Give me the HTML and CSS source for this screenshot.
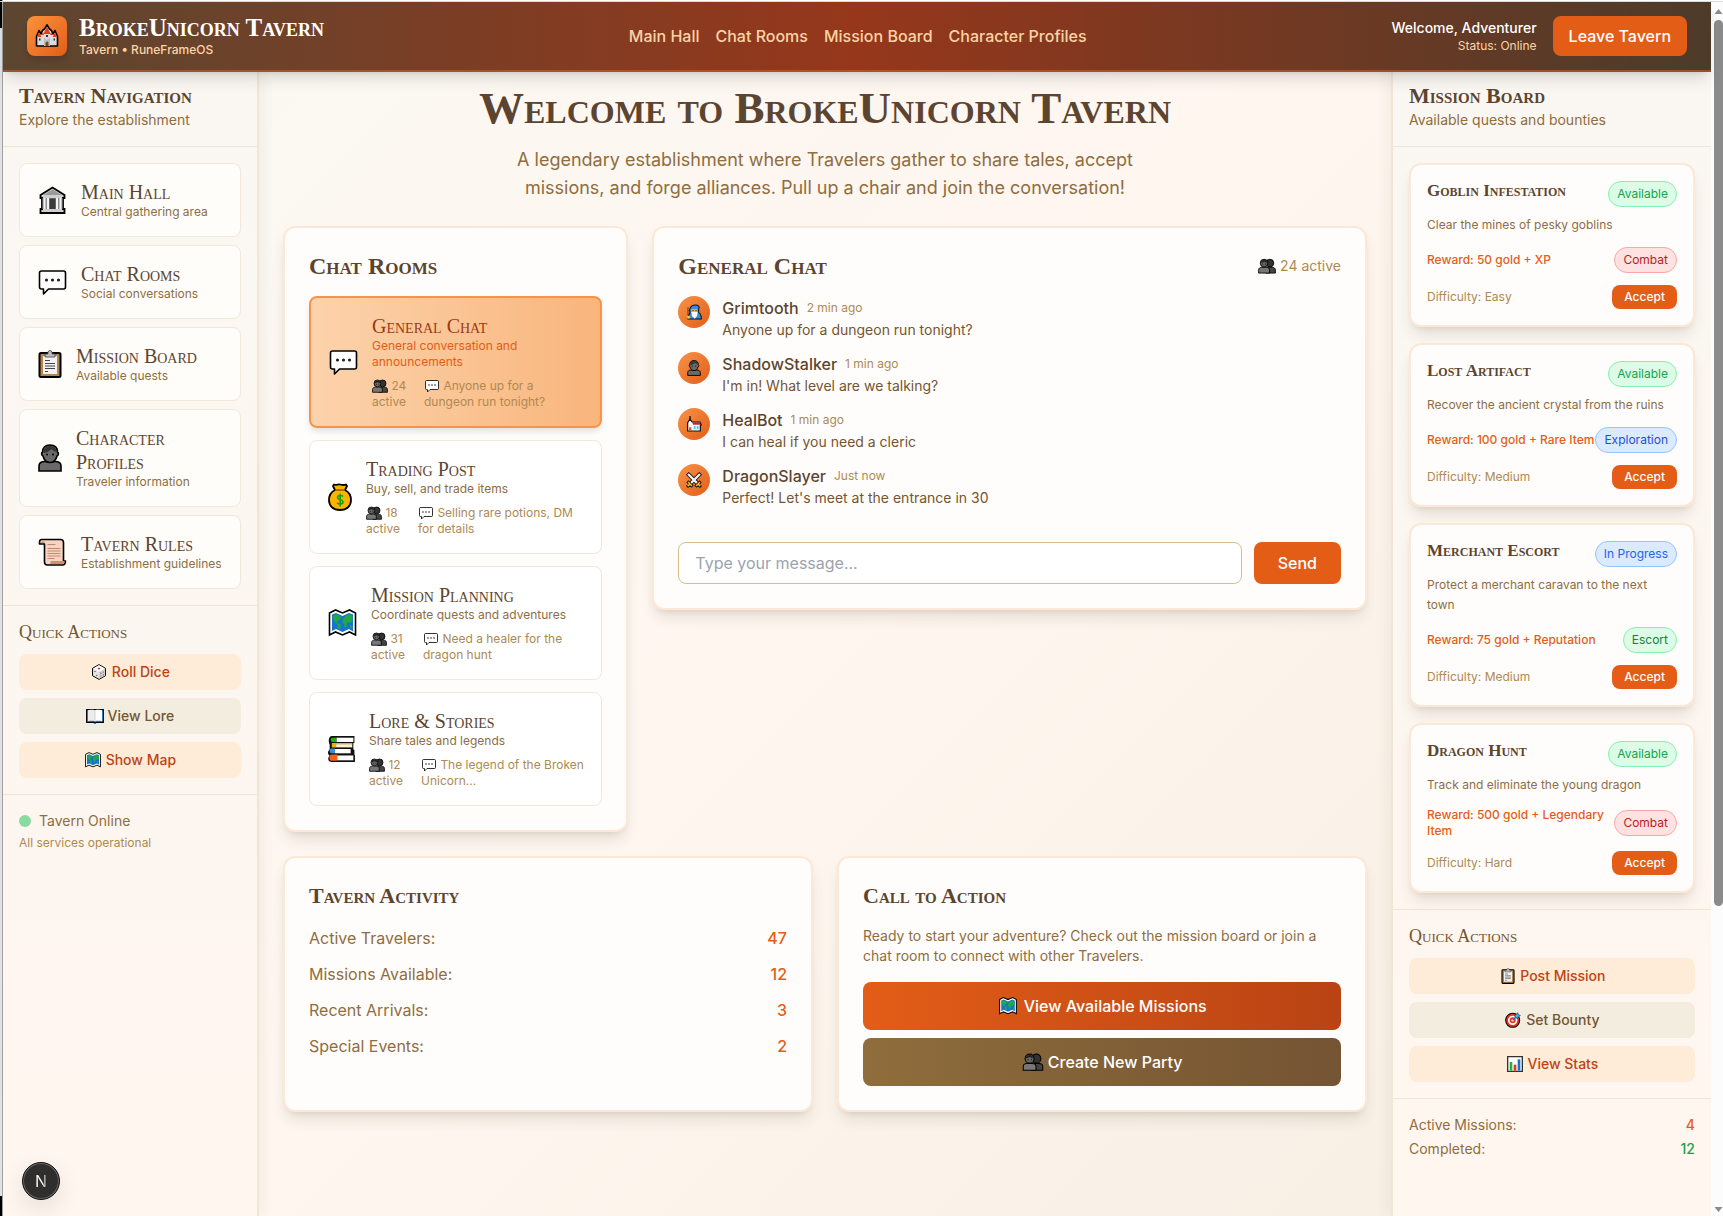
FILE: index.html
```html
<!DOCTYPE html>
<html lang="en">
<head>
<meta charset="utf-8">
<meta name="viewport" content="width=device-width, initial-scale=1">
<title>BrokeUnicorn Tavern</title>
<link rel="stylesheet" href="styles.css">
</head>
<body>
<svg class="sprite" aria-hidden="true">
  <symbol id="castle" viewBox="0 0 24 24">
    <path d="M1.500 22V12.500L4 6.500l2 3.500 1.500-3.500L9.500 5 12 .800 14.500 5l2 1.500L18 10l2-3.500 2.500 6V22z" fill="#dcdcdc" stroke="#000" stroke-width="1.600" stroke-linejoin="round"/>
    <path d="M2.300 13L4 8l2.300 5zM17.700 13L20 8l1.700 5zM8.500 10L12 2.500l3.500 7.500zM6.500 11l1.300-3L9 11zM15 11l1.200-3 1.300 3z" fill="#f03a1c"/>
    <path d="M9 22v-8h1.500v1.500h3V14H15v8z" fill="#bdbdbd"/>
    <path d="M10.500 22v-3a1.500 1.500 0 0 1 3 0v3z" fill="#7a4a22"/>
    <path d="M4 14.500h1.500v2H4zM18.500 14.500H20v2h-1.500zM11 11h2v2h-2z" fill="#333"/>
  </symbol>
  <symbol id="hall" viewBox="0 0 26 28">
    <path d="M1 9l12-7.500L25 9v3h-1.500v11H25v4H1v-4h1.500V12H1z" fill="#cfcfcf" stroke="#000" stroke-width="1.800"/>
    <path d="M4 9l9-5.500L22 9z" fill="#9a9a9a"/>
    <path d="M3 12h20v11H3z" fill="#8d8d8d"/>
    <path d="M4 12h2v11H4zM7.500 12h2v11h-2zM16.500 12h2v11h-2zM20 12h2v11h-2z" fill="#f4f4f4"/>
    <path d="M10 12.500h6V23h-6z" fill="#3a3a3a"/>
  </symbol>
  <symbol id="chat" viewBox="0 0 28 28">
    <path d="M3 3h22a2 2 0 0 1 2 2v14a2 2 0 0 1-2 2H10l-5 5v-5H3a2 2 0 0 1-2-2V5a2 2 0 0 1 2-2z" fill="#fff" stroke="#000" stroke-width="1.600" stroke-linejoin="round"/>
    <g fill="#222"><circle cx="8" cy="12" r="1.600"/><circle cx="14" cy="12" r="1.600"/><circle cx="20" cy="12" r="1.600"/></g>
  </symbol>
  <symbol id="clipboard" viewBox="0 0 24 28">
    <rect x="1.500" y="3" width="21" height="24" rx="1.500" fill="#b58550" stroke="#000" stroke-width="2"/>
    <path d="M5 6h14v18H5z" fill="#f1f1f1"/>
    <path d="M7 7V4h3V2.500a2 2 0 0 1 4 0V4h3v3z" fill="#bdbdbd" stroke="#444" stroke-width=".800"/>
    <path d="M7 10.500h5M7 13.500h10M7 16h10M7 18.500h10M7 21.500h3" stroke="#444" stroke-width="1"/>
  </symbol>
  <symbol id="person" viewBox="0 0 24 28">
    <path d="M1 27v-5c0-3 2.500-4.500 6-4.500h10c3.500 0 6 1.500 6 4.500v5z" fill="#6a6a6a" stroke="#000" stroke-width="1.600"/>
    <path d="M12 1c5 0 7.500 3 7.500 7 1.500 1 1 3.500-.500 4-1 4-3.500 6.500-7 6.500S6 16 5 12c-1.500-.500-2-3-.500-4C4.500 4 7 1 12 1z" fill="#6a6a6a" stroke="#000" stroke-width="1.600"/>
    <path d="M12 2c4.500 0 6.500 3 6.500 6-3-1-4-2-5-3-2 2.500-5 3.500-8 4C5.500 5 7.500 2 12 2z" fill="#333"/>
    <circle cx="9" cy="10.500" r="1" fill="#000"/><circle cx="15" cy="10.500" r="1" fill="#000"/>
  </symbol>
  <symbol id="people" viewBox="0 0 28 24">
    <path d="M12 23v-5c0-3 2-4 5-4h5c3 0 5 1.500 5 4v5z" fill="#444" stroke="#000" stroke-width="1.400"/>
    <circle cx="18.500" cy="7.500" r="6" fill="#333" stroke="#000" stroke-width="1.400"/>
    <path d="M1 23v-5c0-2.500 2-4 5-4h7c3 0 5 1.500 5 4v5z" fill="#777" stroke="#000" stroke-width="1.400"/>
    <circle cx="9.500" cy="7.500" r="6" fill="#666" stroke="#000" stroke-width="1.400"/>
    <path d="M4 7c1-6 10-6 11 0-4 0-5-2-5-2s-2 2-6 2z" fill="#222"/>
    <circle cx="7.500" cy="9" r=".800"/><circle cx="12" cy="9" r=".800"/>
  </symbol>
  <symbol id="scroll" viewBox="0 0 28 28">
    <path d="M3 1.500h19c2 0 3 1 3 3V23h2c0 3-1 4-3 4H9c-2 0-3-1-3-3V6H1c0-3 0-4.500 2-4.500z" fill="#f8d4c0" stroke="#000" stroke-width="1.600" stroke-linejoin="round"/>
    <path d="M2 5h4V3.500H3zM12 23h14c0 2-.500 3-2 3H11c1-.500 1.500-1.500 1-3z" fill="#c99272"/>
    <path d="M9 6.500h8M9 10.500h13M9 13h13M9 15.500h13M9 18h13M9 20.500h7" stroke="#c08a6c" stroke-width="1"/>
  </symbol>
  <symbol id="dice" viewBox="0 0 24 26">
    <path d="M12 1l10.500 6v12L12 25 1.500 19V7z" fill="#e4e4e4" stroke="#000" stroke-width="1.600"/>
    <path d="M12 2l9 5.500-9 5-9-5z" fill="#fff"/><path d="M12 13l9.500-5v10.500L12 24z" fill="#d4d4d4"/>
    <ellipse cx="12" cy="7.500" rx="2" ry="1.500" fill="#e02828"/>
    <g fill="#444"><circle cx="5.500" cy="12" r="1"/><circle cx="8.500" cy="18.500" r="1"/><circle cx="15" cy="15" r="1"/><circle cx="19" cy="13" r="1"/><circle cx="15" cy="19.500" r="1"/><circle cx="19" cy="17.500" r="1"/></g>
  </symbol>
  <symbol id="book" viewBox="0 0 28 24">
    <path d="M1 2h26v20H16l-2 1-2-1H1z" fill="#2b8be0" stroke="#000" stroke-width="1.800"/>
    <path d="M3 3c4-1 9-1 11 0v17c-2-1-7-1-11 0z" fill="#ececec"/><path d="M25 3c-4-1-9-1-11 0v17c2-1 7-1 11 0z" fill="#fff"/>
    <path d="M14 3v17" stroke="#bbb" stroke-width="1"/>
  </symbol>
  <symbol id="map" viewBox="0 0 28 28">
    <path d="M1 4l6-3 7 3 7-3 6 3v22l-6-3-7 3-7-3-6 3z" fill="#fff" stroke="#000" stroke-width="1.600"/>
    <path d="M3.500 5.500L7.500 4l6.500 3 6.500-3 4 1.500v17L20.500 20 14 23l-6.500-3-4 2z" fill="#1673d1"/>
    <path d="M4 7l4-2 5 3-2 3-2 1-1 3-3-4zM9 14l3 1v4l-2 2-1-4zM14 11l3-4 4-2 3 2v5l-3 2-2-1-1 5-2 1v-4l-2-1zM21 16l3 1v3l-2-1z" fill="#22a845"/>
  </symbol>
  <symbol id="bag" viewBox="0 0 24 28">
    <path d="M6 1.500c2 1 4-.500 6 0s4 1 6 0l1 1.500-2 4c4 2 6 6 6 10 0 6-4 10-11 10S1 23 1 17c0-4 2-8 6-10L5 3z" fill="#fdb400" stroke="#000" stroke-width="1.800" stroke-linejoin="round"/>
    <path d="M7 7h10" stroke="#8b5a00" stroke-width="1.500"/>
    <path d="M15 13.500c-1-1.500-5.500-1.500-5.500 1s5.500 2 5.500 4.500-4.500 2.500-6 .700M12.200 10.500v13" stroke="#16a016" stroke-width="1.600" fill="none"/>
  </symbol>
  <symbol id="books" viewBox="0 0 26 26">
    <path d="M4 1h21v6.500h-1v6l1 .500v4.500h.500V25H4c-4 0-4-4-2-6-2-1-2-4 0-5.500V9C.500 6 1 1 4 1z" fill="#111"/>
    <path d="M4.500 2.500h4v4h-4c-2 0-2-4 0-4z" fill="#17b317"/><path d="M8.500 2.500H24v4H8.500z" fill="#fff"/>
    <path d="M4 7.500h19v1H8v3H4z" fill="#f0b000"/><path d="M8 8.500h15v3H8z" fill="#fff4c8"/>
    <path d="M3.500 12.500H7v4.500H3.500c-2 0-2-4.500 0-4.500z" fill="#3a8fdc"/><path d="M7 13h14.500v4H7z" fill="#fff"/>
    <path d="M4 18h5v6H4c-3 0-3-6 0-6z" fill="#f4631b"/><path d="M9 19h15v4.500H9z" fill="#fff"/>
  </symbol>
  <symbol id="wizard" viewBox="0 0 24 24">
    <path d="M3 22.500c0-4 1-7 3-9-2-6 1-12 8-12 5 0 7 3 5 6v5c3 2 4 6 4 10z" fill="#2f8fe8" stroke="#111" stroke-width="1.600"/>
    <path d="M8 8h9v5H8z" fill="#f7c53c"/><path d="M8 12h9.500l-1 6-3.500 4-4-4z" fill="#fff"/>
    <circle cx="10.500" cy="10" r=".900"/><circle cx="15" cy="10" r=".900"/><circle cx="4" cy="20" r="2.200" fill="#f7c53c"/><path d="M3 5v12" stroke="#6b3d14" stroke-width="1.600"/>
  </symbol>
  <symbol id="church" viewBox="0 0 24 24">
    <path d="M2.500 22.500V10L6 4.500 9 9h12l2 4.500h-1.500v9z" fill="#fff" stroke="#111" stroke-width="1.800"/>
    <path d="M6 0v6" stroke="#111" stroke-width="2"/><path d="M9.500 9.500h11l1.800 3.500H10.500z" fill="#c92020"/>
    <path d="M4.500 17H8v5H4.500z" fill="#e8541c"/><path d="M11.500 15h3v5h-3zM16 15h3v5h-3z" fill="#4dd0f5"/>
  </symbol>
  <symbol id="swords" viewBox="0 0 24 24">
    <path d="M2 2l16 16M22 2L6 18" stroke="#111" stroke-width="6"/>
    <path d="M3 3l14 14M21 3L7 17" stroke="#f2f2f2" stroke-width="3.500"/>
    <path d="M2 14l8 8M22 14l-8 8M6 18l-4.500 4.500M18 18l4.500 4.500" stroke="#111" stroke-width="4.500"/>
    <path d="M3 15l6 6M21 15l-6 6M6 18l-3.500 3.500M18 18l3.500 3.500" stroke="#f5b82e" stroke-width="2.200"/>
  </symbol>
  <symbol id="target" viewBox="0 0 24 24">
    <circle cx="11.500" cy="12.500" r="10.500" fill="#e8341c" stroke="#000" stroke-width="1.600"/>
    <circle cx="11.500" cy="12.500" r="7" fill="#fff"/><circle cx="11.500" cy="12.500" r="4.500" fill="#e8341c"/><circle cx="11.500" cy="12.500" r="1.800" fill="#fff"/>
    <path d="M11.500 12.500L18 6" stroke="#1673d1" stroke-width="1.800"/><path d="M15 8.500V5l4-4 1 3 3 1-4 4h-3z" fill="#34b4ee" stroke="#114" stroke-width=".800"/>
  </symbol>
  <symbol id="chart" viewBox="0 0 24 24">
    <path d="M1 1h22v22H1z" fill="#fff" stroke="#333" stroke-width="2"/>
    <path d="M4 9h4v13H4z" fill="#22b33a"/><path d="M10 13h4v9h-4z" fill="#e8341c"/><path d="M16 5h4v17h-4z" fill="#1673d1"/>
  </symbol>
</svg>

<div class="app">
  <header class="topbar">
    <div class="brand">
      <span class="brand-mark"><svg class="ic-logo"><use href="#castle"/></svg></span>
      <div>
        <div class="display brand-name">BrokeUnicorn Tavern</div>
        <div class="brand-sub">Tavern • RuneFrameOS</div>
      </div>
    </div>
    <nav class="topnav">
      <a href="#main-hall">Main Hall</a>
      <a href="#chat-rooms">Chat Rooms</a>
      <a href="#mission-board">Mission Board</a>
      <a href="#profiles">Character Profiles</a>
    </nav>
    <div class="account">
      <div class="account-text">
        <div class="account-name">Welcome, Adventurer</div>
        <div class="account-status">Status: Online</div>
      </div>
      <button class="leave" type="button">Leave Tavern</button>
    </div>
  </header>

  <div class="columns">
    <aside class="side side-left">
      <div class="side-head">
        <h2 class="display side-title">Tavern Navigation</h2>
        <p class="side-sub">Explore the establishment</p>
      </div>
      <nav class="nav-list">
        <a class="nav-item" href="#main-hall"><svg class="ic-lg wide"><use href="#hall"/></svg><span><span class="display item-title">Main Hall</span><span class="item-sub">Central gathering area</span></span></a>
        <a class="nav-item" href="#chat-rooms"><svg class="ic-lg wide"><use href="#chat"/></svg><span><span class="display item-title">Chat Rooms</span><span class="item-sub">Social conversations</span></span></a>
        <a class="nav-item" href="#mission-board"><svg class="ic-lg"><use href="#clipboard"/></svg><span><span class="display item-title">Mission Board</span><span class="item-sub">Available quests</span></span></a>
        <a class="nav-item" href="#profiles"><svg class="ic-lg"><use href="#person"/></svg><span><span class="display item-title">Character<br>Profiles</span><span class="item-sub">Traveler information</span></span></a>
        <a class="nav-item" href="#rules"><svg class="ic-lg wide"><use href="#scroll"/></svg><span><span class="display item-title">Tavern Rules</span><span class="item-sub">Establishment guidelines</span></span></a>
      </nav>
      <section class="side-section">
        <h3 class="display quick-title">Quick Actions</h3>
        <div class="quick-list">
          <button class="quick" type="button"><svg class="ic-md"><use href="#dice"/></svg> Roll Dice</button>
          <button class="quick quick-alt" type="button"><svg class="ic-md"><use href="#book"/></svg> View Lore</button>
          <button class="quick" type="button"><svg class="ic-md"><use href="#map"/></svg> Show Map</button>
        </div>
      </section>
      <section class="side-section">
        <div class="online"><span class="dot"></span>Tavern Online</div>
        <div class="services">All services operational</div>
      </section>
    </aside>

    <main class="hall">
      <div class="hero">
        <h1 class="display">Welcome to BrokeUnicorn Tavern</h1>
        <p>A legendary establishment where Travelers gather to share tales, accept missions, and forge alliances. Pull up a chair and join the conversation!</p>
      </div>

      <div class="chat-grid">
        <section class="card">
          <h2 class="display card-title">Chat Rooms</h2>
          <div class="rooms">
            <a class="room active" href="#general"><svg class="ic-lg wide"><use href="#chat"/></svg>
              <div><div class="display item-title">General Chat</div><div class="item-sub">General conversation and announcements</div>
                <div class="room-meta"><span class="room-count"><svg class="ic-sm"><use href="#people"/></svg> 24 active</span><span><svg class="ic-sm"><use href="#chat"/></svg> Anyone up for a dungeon run tonight?</span></div></div></a>
            <a class="room" href="#trading"><svg class="ic-lg"><use href="#bag"/></svg>
              <div><div class="display item-title">Trading Post</div><div class="item-sub">Buy, sell, and trade items</div>
                <div class="room-meta"><span class="room-count"><svg class="ic-sm"><use href="#people"/></svg> 18 active</span><span><svg class="ic-sm"><use href="#chat"/></svg> Selling rare potions, DM for details</span></div></div></a>
            <a class="room" href="#planning"><svg class="ic-lg wide"><use href="#map"/></svg>
              <div><div class="display item-title">Mission Planning</div><div class="item-sub">Coordinate quests and adventures</div>
                <div class="room-meta"><span class="room-count"><svg class="ic-sm"><use href="#people"/></svg> 31 active</span><span><svg class="ic-sm"><use href="#chat"/></svg> Need a healer for the dragon hunt</span></div></div></a>
            <a class="room" href="#lore"><svg class="ic-lg medium"><use href="#books"/></svg>
              <div><div class="display item-title">Lore &amp; Stories</div><div class="item-sub">Share tales and legends</div>
                <div class="room-meta"><span class="room-count"><svg class="ic-sm"><use href="#people"/></svg> 12 active</span><span><svg class="ic-sm"><use href="#chat"/></svg> The legend of the Broken Unicorn...</span></div></div></a>
          </div>
        </section>

        <section class="card card-wide">
          <div class="chat-head">
            <h2 class="display card-title">General Chat</h2>
            <span class="chat-count"><svg class="ic-md"><use href="#people"/></svg> 24 active</span>
          </div>
          <ul class="messages">
            <li class="message"><span class="avatar"><svg><use href="#wizard"/></svg></span><div><div class="message-head"><b>Grimtooth</b><time>2 min ago</time></div><p>Anyone up for a dungeon run tonight?</p></div></li>
            <li class="message"><span class="avatar"><svg><use href="#person"/></svg></span><div><div class="message-head"><b>ShadowStalker</b><time>1 min ago</time></div><p>I'm in! What level are we talking?</p></div></li>
            <li class="message"><span class="avatar"><svg><use href="#church"/></svg></span><div><div class="message-head"><b>HealBot</b><time>1 min ago</time></div><p>I can heal if you need a cleric</p></div></li>
            <li class="message"><span class="avatar"><svg><use href="#swords"/></svg></span><div><div class="message-head"><b>DragonSlayer</b><time>Just now</time></div><p>Perfect! Let's meet at the entrance in 30</p></div></li>
          </ul>
          <form class="composer">
            <input type="text" aria-label="Message" placeholder="Type your message...">
            <button type="button">Send</button>
          </form>
        </section>
      </div>

      <div class="lower-grid">
        <section class="card">
          <h3 class="display panel-title">Tavern Activity</h3>
          <dl class="stats">
            <div><dt>Active Travelers:</dt><dd>47</dd></div>
            <div><dt>Missions Available:</dt><dd>12</dd></div>
            <div><dt>Recent Arrivals:</dt><dd>3</dd></div>
            <div><dt>Special Events:</dt><dd>2</dd></div>
          </dl>
        </section>
        <section class="card">
          <h3 class="display panel-title">Call to Action</h3>
          <p class="cta-text">Ready to start your adventure? Check out the mission board or join a chat room to connect with other Travelers.</p>
          <div class="cta-list">
            <button class="cta" type="button"><svg class="ic-btn"><use href="#map"/></svg> View Available Missions</button>
            <button class="cta cta-alt" type="button"><svg class="ic-btn"><use href="#people"/></svg> Create New Party</button>
          </div>
        </section>
      </div>
    </main>

    <aside class="side side-right">
      <div class="side-head">
        <h2 class="display side-title">Mission Board</h2>
        <p class="side-sub">Available quests and bounties</p>
      </div>
      <div class="missions">
        <article class="mission">
          <div class="mission-top"><h3 class="display">Goblin Infestation</h3><span class="badge green">Available</span></div>
          <p>Clear the mines of pesky goblins</p>
          <div class="mission-row"><span class="reward">Reward: 50 gold + XP</span><span class="badge red">Combat</span></div>
          <div class="mission-row"><span class="difficulty">Difficulty: Easy</span><button class="accept" type="button">Accept</button></div>
        </article>
        <article class="mission">
          <div class="mission-top"><h3 class="display">Lost Artifact</h3><span class="badge green">Available</span></div>
          <p>Recover the ancient crystal from the ruins</p>
          <div class="mission-row"><span class="reward">Reward: 100 gold + Rare Item</span><span class="badge indigo">Exploration</span></div>
          <div class="mission-row"><span class="difficulty">Difficulty: Medium</span><button class="accept" type="button">Accept</button></div>
        </article>
        <article class="mission">
          <div class="mission-top"><h3 class="display">Merchant Escort</h3><span class="badge blue">In Progress</span></div>
          <p>Protect a merchant caravan to the next town</p>
          <div class="mission-row"><span class="reward">Reward: 75 gold + Reputation</span><span class="badge forest">Escort</span></div>
          <div class="mission-row"><span class="difficulty">Difficulty: Medium</span><button class="accept" type="button">Accept</button></div>
        </article>
        <article class="mission">
          <div class="mission-top"><h3 class="display">Dragon Hunt</h3><span class="badge green">Available</span></div>
          <p>Track and eliminate the young dragon</p>
          <div class="mission-row"><span class="reward">Reward: 500 gold + Legendary Item</span><span class="badge red">Combat</span></div>
          <div class="mission-row"><span class="difficulty">Difficulty: Hard</span><button class="accept" type="button">Accept</button></div>
        </article>
      </div>
      <section class="side-section">
        <h3 class="display quick-title">Quick Actions</h3>
        <div class="quick-list">
          <button class="quick" type="button"><svg class="ic-md"><use href="#clipboard"/></svg> Post Mission</button>
          <button class="quick quick-alt" type="button"><svg class="ic-md"><use href="#target"/></svg> Set Bounty</button>
          <button class="quick" type="button"><svg class="ic-md"><use href="#chart"/></svg> View Stats</button>
        </div>
      </section>
      <section class="side-section">
        <dl class="totals">
          <div><dt>Active Missions:</dt><dd>4</dd></div>
          <div><dt>Completed:</dt><dd class="done">12</dd></div>
        </dl>
      </section>
    </aside>
  </div>
</div>
<div class="scrollbar" aria-hidden="true">
  <svg viewBox="0 0 8 5"><path d="M0 5l4-5 4 5z" fill="#8b8b8b"/></svg>
  <span class="track"><span class="thumb"></span></span>
  <svg viewBox="0 0 8 5"><path d="M0 0l4 5 4-5z" fill="#8b8b8b"/></svg>
</div>
<button class="dev-badge" type="button" aria-label="Open developer tools"><span>N</span></button>
</body>
</html>
```
FILE: styles.css
```css
* { box-sizing: border-box; margin: 0; padding: 0; }

body {
  display: flex;
  min-height: 100vh;
  padding: 2px 0 0 3px;
  font: 16px/24px Inter, "Liberation Sans", sans-serif;
  color: #5c4530;
  background:
    linear-gradient(#d9dcde, #d9dcde) 0 1px / 100% 1px no-repeat,
    linear-gradient(#000, #000) 0 0 / 2px 28px no-repeat,
    linear-gradient(#000, #000) 0 100% / 2px 20px no-repeat,
    linear-gradient(90deg, #e4e4e6 2px, #a2a2a2 2px, #a2a2a2 3px, #fff 3px);
}

button, input { font: inherit; border: 0; cursor: pointer; }
a { color: inherit; text-decoration: none; }
ul { list-style: none; }

.sprite { position: absolute; width: 0; height: 0; }

.display {
  font-family: "Liberation Serif", serif;
  font-variant: small-caps;
  font-weight: 400;
}

.app {
  flex: 1;
  min-width: 0;
  display: flex;
  flex-direction: column;
  background: linear-gradient(135deg, #faf8f3 0%, #fff6ef 50%, #f5eee2 100%);
}

/* Header */
.topbar {
  position: relative;
  z-index: 2;
  display: flex;
  align-items: center;
  justify-content: space-between;
  height: 70px;
  padding: 0 24px;
  color: #fff;
  background: linear-gradient(90deg, #5c4630 0%, #96371b 50%, #4d3b2a 100%);
  border-bottom: 2px solid rgba(200, 96, 42, .6);
  box-shadow: 0 10px 15px -3px rgba(0, 0, 0, .12), 0 4px 6px -4px rgba(0, 0, 0, .12);
}
.brand { display: flex; align-items: center; gap: 12px; }
.brand-mark {
  display: flex;
  align-items: center;
  justify-content: center;
  width: 40px;
  height: 40px;
  border-radius: 8px;
  background: linear-gradient(135deg, #fb923c, #e35d17);
  box-shadow: 0 4px 6px rgba(0, 0, 0, .15);
}
.ic-logo { width: 24px; height: 24px; }
.brand-name { font-size: 25px; line-height: 28px; font-weight: 700; }
.brand-sub { font-size: 12px; line-height: 16px; font-weight: 500; color: #fdd3a6; }
.topnav { display: flex; gap: 16px; font-weight: 500; color: #fdd3a6; }
.account { display: flex; align-items: center; gap: 16px; }
.account-text { text-align: right; }
.account-name { font-size: 14px; line-height: 20px; font-weight: 500; }
.account-status { font-size: 12px; line-height: 16px; color: #fdd3a6; }
.leave { height: 40px; padding: 0 16px; border-radius: 8px; font-weight: 500; color: #fff; background: #e35d17; }

/* Columns */
.columns { flex: 1; display: flex; }
.side { flex: none; background: linear-gradient(#faf7f2, #fff6ef); }
.side-left { width: 256px; border-right: 2px solid #f0e6d6; box-shadow: 4px 0 12px rgba(90, 60, 30, .06); }
.side-right { width: 320px; border-left: 2px solid #f0e6d6; box-shadow: -4px 0 12px rgba(90, 60, 30, .06); }
.side-head { padding: 10px 16px 16px; border-bottom: 1px solid #f0e6d6; }
.side-title, .panel-title { font-size: 22px; line-height: 28px; font-weight: 700; }
.side-sub { font-size: 14px; line-height: 20px; color: #8f6d3f; }
.nav-list { display: flex; flex-direction: column; gap: 8px; padding: 16px; }
.nav-item, .room {
  display: flex;
  align-items: center;
  gap: 12px;
  padding: 16px;
  border: 1px solid #f0e9da;
  border-radius: 8px;
  background: #fffdfa;
}
.nav-item > span, .nav-item > span > span { display: block; }
.ic-lg { flex: none; width: 28px; height: 28px; }
.ic-lg.medium { width: 31px; }
.ic-lg.wide { width: 33px; }
.item-title { font-size: 20px; line-height: 24px; }
.item-sub { font-size: 12px; line-height: 16px; color: #8f6d3f; }
.side-section { padding: 16px; border-top: 1px solid #f0e6d6; }
.quick-title { font-size: 18px; line-height: 20px; color: #75552f; }
.quick-list { display: flex; flex-direction: column; gap: 8px; margin-top: 12px; }
.quick {
  height: 36px;
  border-radius: 8px;
  font-size: 14px;
  font-weight: 500;
  color: #bf4312;
  background: #feecd9;
}
.quick-alt { color: #75552f; background: #f3eddf; }
.ic-md { width: 18px; height: 16px; vertical-align: -3px; }
.ic-sm { width: 16px; height: 14px; vertical-align: -3px; }
.ic-btn { width: 22px; height: 18px; vertical-align: -3px; }
.online { display: flex; align-items: center; gap: 8px; font-size: 14px; line-height: 20px; color: #8f6d3f; }
.dot { width: 12px; height: 12px; border-radius: 50%; background: #8adba0; }
.services { margin-top: 4px; font-size: 12px; line-height: 16px; color: #ae8a51; }

/* Main hall */
.hall { flex: 1; min-width: 0; padding: 16px 24px 24px; }
.hero { text-align: center; }
.hero h1 { font-size: 45px; line-height: 40px; font-weight: 700; }
.hero p { max-width: 672px; margin: 18px auto 24px; font-size: 18px; line-height: 28px; color: #8f6d3f; }
.chat-grid, .lower-grid { display: grid; gap: 24px; }
.chat-grid { grid-template-columns: repeat(3, 1fr); align-items: start; }
.lower-grid { grid-template-columns: repeat(2, 1fr); margin-top: 24px; }
.card {
  padding: 24px;
  border: 2px solid #fde8d7;
  border-radius: 12px;
  background: #fffdfb;
  box-shadow: 0 10px 15px -3px rgba(60, 40, 20, .12), 0 4px 6px -4px rgba(60, 40, 20, .12);
}
.card-wide { grid-column: span 2; }
.card-title { font-size: 24px; line-height: 28px; font-weight: 700; }
.rooms { display: flex; flex-direction: column; gap: 12px; margin-top: 16px; }
.room { background: #fff; }
.room.active {
  border: 2px solid #f7944a;
  background: linear-gradient(90deg, #fcd3ac, #f9b57c);
  box-shadow: 0 4px 6px -1px rgba(0, 0, 0, .12);
}
.room.active .item-title { color: #9c3a16; }
.room.active .item-sub { color: #e35d17; }
.room-meta { display: flex; gap: 16px; margin-top: 8px; font-size: 12px; line-height: 16px; color: #ae8a51; }
.room-count { flex: none; width: 36px; }
.chat-head { display: flex; align-items: center; justify-content: space-between; }
.chat-count { font-size: 14px; line-height: 20px; color: #ae8a51; }
.messages { display: flex; flex-direction: column; gap: 12px; margin-top: 16px; }
.message { display: flex; gap: 12px; }
.avatar {
  flex: none;
  display: flex;
  align-items: center;
  justify-content: center;
  width: 32px;
  height: 32px;
  border-radius: 50%;
  background: linear-gradient(135deg, #f7944a, #e35d17);
}
.avatar svg { width: 16px; height: 16px; }
.message-head { display: flex; align-items: center; gap: 8px; }
.message-head b { font-weight: 500; }
.message-head time { font-size: 12px; color: #ae8a51; }
.message p { font-size: 14px; line-height: 20px; color: #75552f; }
.composer { display: flex; gap: 12px; margin-top: 34px; }
.composer input {
  flex: 1;
  min-width: 0;
  height: 42px;
  padding: 0 16px;
  border: 1px solid #d6bf8b;
  border-radius: 8px;
  background: #fff;
}
.composer input::placeholder { color: #9ca3af; }
.composer button { padding: 0 24px; border-radius: 8px; font-weight: 500; color: #fff; background: #e35d17; }
.stats { display: flex; flex-direction: column; gap: 12px; margin-top: 16px; color: #8f6d3f; }
.stats div, .totals div { display: flex; justify-content: space-between; }
.stats dd, .totals dd { font-weight: 500; color: #e35d17; }
.cta-text { margin: 16px 0; font-size: 14px; line-height: 20px; color: #8f6d3f; }
.cta-list { display: flex; flex-direction: column; gap: 8px; }
.cta { height: 48px; border-radius: 8px; font-weight: 500; color: #fff; background: linear-gradient(90deg, #e35d17, #b94314); }
.cta-alt { background: linear-gradient(90deg, #8f6d3c, #745433); }

/* Mission board */
.missions { display: flex; flex-direction: column; gap: 16px; padding: 16px; }
.mission {
  padding: 16px;
  border: 2px solid #fde8d7;
  border-radius: 12px;
  background: #fffdfb;
  box-shadow: 0 10px 15px -3px rgba(60, 40, 20, .12), 0 4px 6px -4px rgba(60, 40, 20, .12);
  font-size: 12px;
  line-height: 16px;
}
.mission-top, .mission-row { display: flex; justify-content: space-between; }
.mission-top h3 { font-size: 17px; line-height: 20px; font-weight: 700; }
.mission p { margin: 8px 0 12px; line-height: 20px; color: #8f6d3f; }
.mission-row { align-items: center; }
.mission-row + .mission-row { margin-top: 12px; }
.reward { font-weight: 500; color: #e35d17; }
.difficulty { color: #ae8a51; }
.badge { flex: none; padding: 4px 8px; border: 1px solid; border-radius: 13px; }
.green { color: #16a34a; background: #dcfce7; border-color: #86efac; }
.forest { color: #15803d; background: #dcfce7; border-color: #86efac; }
.red { color: #b91c1c; background: #fee2e2; border-color: #fca5a5; }
.blue { color: #2563eb; background: #dbeafe; border-color: #93c5fd; }
.indigo { color: #1d4ed8; background: #dbeafe; border-color: #93c5fd; }
.accept { height: 24px; padding: 0 12px; border-radius: 8px; font-weight: 500; color: #fff; background: #e35d17; }
.totals { display: flex; flex-direction: column; gap: 4px; font-size: 14px; line-height: 20px; color: #8f6d3f; }
.totals .done { color: #16a34a; }

/* Window scrollbar */
.scrollbar {
  flex: none;
  display: flex;
  flex-direction: column;
  align-items: flex-end;
  gap: 6px;
  width: 12px;
  padding: 7px 0 4px;
  background: #fcfcfc;
}
.scrollbar svg { width: 9px; height: 5px; }
.track { flex: 1; width: 9px; }
.thumb { display: block; height: 75%; border-radius: 5px; background: #8b8b8b; }

/* Floating developer badge */
.dev-badge {
  position: fixed;
  left: 22px;
  bottom: 16px;
  z-index: 3;
  width: 38px;
  height: 38px;
  border: 1px solid #111;
  border-radius: 50%;
  color: #fff;
  background: #2f2e2d;
  box-shadow: inset 0 0 0 1px #6b6b6b, 0 8px 24px rgba(0, 0, 0, .1);
}
.dev-badge span {
  background: linear-gradient(90deg, #fff 60%, #777);
  background-clip: text;
  -webkit-background-clip: text;
  color: transparent;
}
```
